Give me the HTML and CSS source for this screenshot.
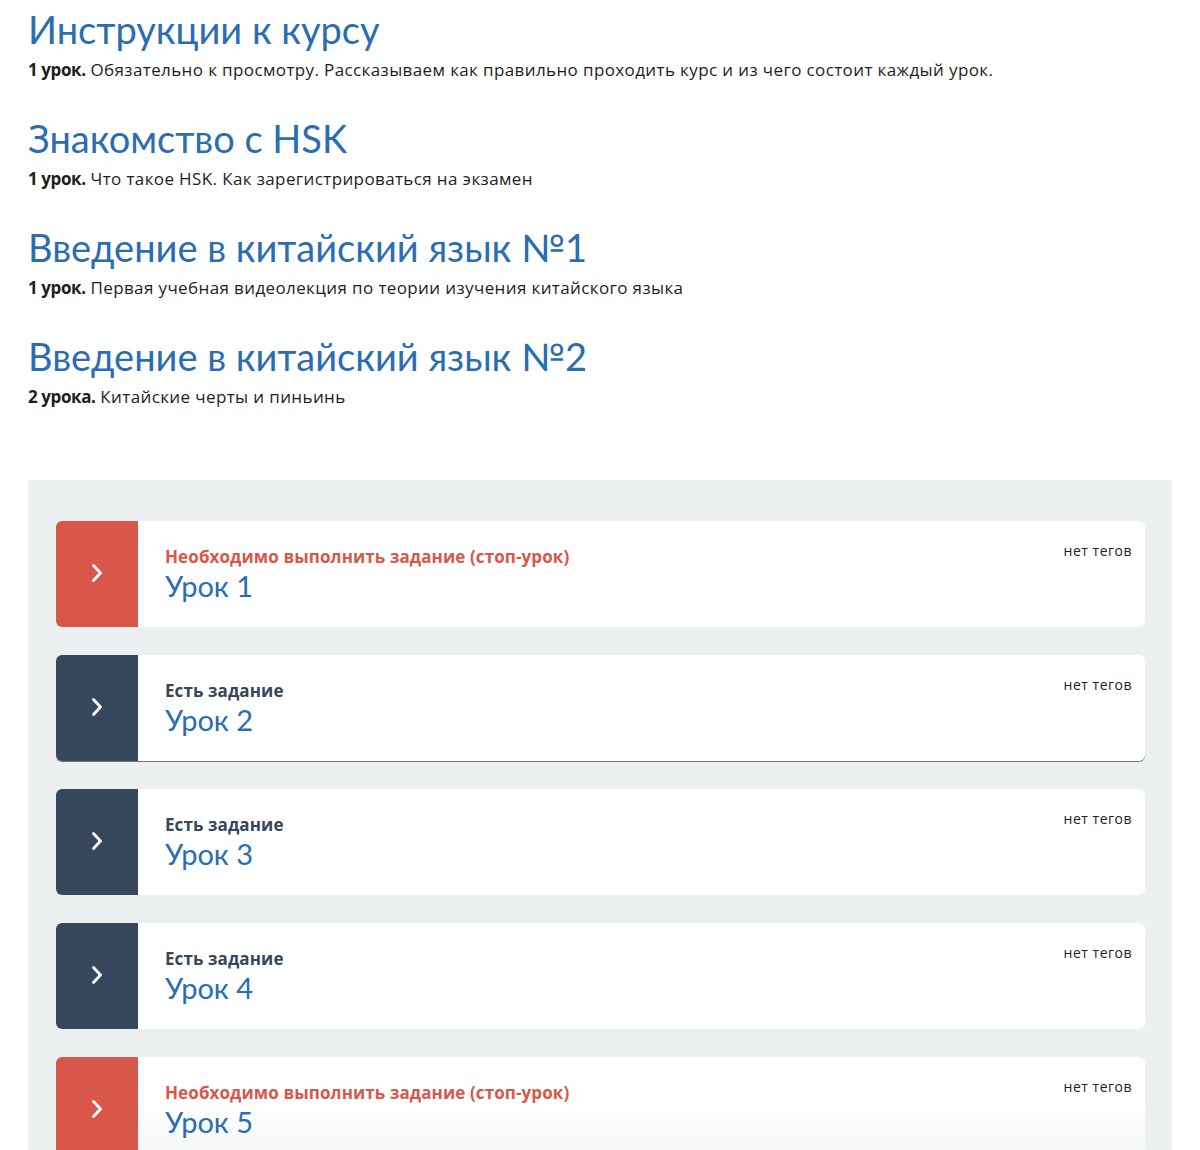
FILE: index.html
```html
<!DOCTYPE html>
<html>
  <head>
    <meta charset="utf-8" />
    <meta name="viewport" content="width=device-width, initial-scale=1" />
    <title>Курс HSK</title>
    <link rel="stylesheet" href="styles.css">
  </head>

  <body>
    <main class="page">
      <section class="topic">
        <h2 class="topic-title">Инструкции к курсу</h2>
        <p class="topic-desc"><b>1 урок.</b> Обязательно к просмотру. Рассказываем как правильно проходить курс и из чего состоит каждый урок.</p>
      </section>

      <section class="topic">
        <h2 class="topic-title">Знакомство с HSK</h2>
        <p class="topic-desc"><b>1 урок.</b> Что такое HSK. Как зарегистрироваться на экзамен</p>
      </section>

      <section class="topic">
        <h2 class="topic-title">Введение в китайский язык №1</h2>
        <p class="topic-desc"><b>1 урок.</b> Первая учебная видеолекция по теории изучения китайского языка</p>
      </section>

      <section class="topic">
        <h2 class="topic-title">Введение в китайский язык №2</h2>
        <p class="topic-desc"><b>2 урока.</b> Китайские черты и пиньинь</p>
      </section>

      <div class="lessons">
        <a class="lesson lesson-stop" href="#">
          <span class="lesson-arrow">
            <svg width="12" height="20" viewBox="0 0 12 20"><path d="M2.5 2.5 L9.5 10 L2.5 17.5" fill="none" stroke="#fff" stroke-width="2.8" stroke-linecap="round" stroke-linejoin="round"/></svg>
          </span>
          <span class="lesson-body">
            <span class="lesson-status">Необходимо выполнить задание (стоп-урок)</span>
            <span class="lesson-name">Урок 1</span>
          </span>
          <span class="lesson-tags">нет тегов</span>
        </a>

        <a class="lesson lesson-task lesson-active" href="#">
          <span class="lesson-arrow">
            <svg width="12" height="20" viewBox="0 0 12 20"><path d="M2.5 2.5 L9.5 10 L2.5 17.5" fill="none" stroke="#fff" stroke-width="2.8" stroke-linecap="round" stroke-linejoin="round"/></svg>
          </span>
          <span class="lesson-body">
            <span class="lesson-status">Есть задание</span>
            <span class="lesson-name">Урок 2</span>
          </span>
          <span class="lesson-tags">нет тегов</span>
        </a>

        <a class="lesson lesson-task" href="#">
          <span class="lesson-arrow">
            <svg width="12" height="20" viewBox="0 0 12 20"><path d="M2.5 2.5 L9.5 10 L2.5 17.5" fill="none" stroke="#fff" stroke-width="2.8" stroke-linecap="round" stroke-linejoin="round"/></svg>
          </span>
          <span class="lesson-body">
            <span class="lesson-status">Есть задание</span>
            <span class="lesson-name">Урок 3</span>
          </span>
          <span class="lesson-tags">нет тегов</span>
        </a>

        <a class="lesson lesson-task" href="#">
          <span class="lesson-arrow">
            <svg width="12" height="20" viewBox="0 0 12 20"><path d="M2.5 2.5 L9.5 10 L2.5 17.5" fill="none" stroke="#fff" stroke-width="2.8" stroke-linecap="round" stroke-linejoin="round"/></svg>
          </span>
          <span class="lesson-body">
            <span class="lesson-status">Есть задание</span>
            <span class="lesson-name">Урок 4</span>
          </span>
          <span class="lesson-tags">нет тегов</span>
        </a>

        <a class="lesson lesson-stop lesson-faded" href="#">
          <span class="lesson-arrow">
            <svg width="12" height="20" viewBox="0 0 12 20"><path d="M2.5 2.5 L9.5 10 L2.5 17.5" fill="none" stroke="#fff" stroke-width="2.8" stroke-linecap="round" stroke-linejoin="round"/></svg>
          </span>
          <span class="lesson-body">
            <span class="lesson-status">Необходимо выполнить задание (стоп-урок)</span>
            <span class="lesson-name">Урок 5</span>
          </span>
          <span class="lesson-tags">нет тегов</span>
        </a>
      </div>
    </main>
  </body>
</html>
```

FILE: styles.css
```css
/* ---------- reset ---------- */
* {
  margin: 0;
  padding: 0;
  box-sizing: border-box;
}

body {
  font-family: "Open Sans", "Lato", sans-serif;
  color: #222;
  background: #fff;
}

/* ---------- topics ---------- */
.page {
  padding: 8px 28px 0 28px;
  width: 1200px;
}

.topic {
  height: 109px;
}

.topic-title {
  font-family: "Lato", "Open Sans", sans-serif;
  font-size: 38px;
  font-weight: 400;
  line-height: 42px;
  color: #2a6db1;
}

.topic-desc {
  margin-top: 9px;
  font-size: 17px;
  line-height: 22px;
  letter-spacing: 0.38px;
  color: #1e1e1e;
}

.topic-desc b {
  font-weight: 700;
  letter-spacing: -0.4px;
}

/* ---------- lessons ---------- */
.lessons {
  margin-top: 36px;
  width: 1144px;
  padding: 41px 27px 40px 28px;
  background: #ecf0f1;
  display: flex;
  flex-direction: column;
  gap: 28px;
}

.lesson {
  display: flex;
  height: 106px;
  background: #fff;
  border-radius: 6px;
  overflow: hidden;
  text-decoration: none;
}

.lesson-faded .lesson-body,
.lesson-faded .lesson-tags {
  background: linear-gradient(#fff 45%, #f3f4f5);
}

.lesson-arrow {
  width: 82px;
  flex: none;
  display: flex;
  align-items: center;
  justify-content: center;
  padding-bottom: 2px;
}

.lesson-stop .lesson-arrow {
  background: #d9574a;
}

.lesson-task .lesson-arrow {
  background: #36475c;
}

.lesson-active {
  box-shadow: 0 1px 0 #6d7884;
}

.lesson-body {
  flex: 1;
  display: flex;
  flex-direction: column;
  padding: 25px 0 0 27px;
}

.lesson-status {
  font-size: 17px;
  font-weight: 700;
  line-height: 22px;
  letter-spacing: 0.1px;
}

.lesson-stop .lesson-status {
  color: #d9574a;
}

.lesson-task .lesson-status {
  color: #36475c;
}

.lesson-name {
  font-family: "Lato", "Open Sans", sans-serif;
  font-size: 29px;
  line-height: 36px;
  color: #2a6db1;
}

.lesson-tags {
  padding: 21px 13px 0 0;
  font-size: 14px;
  line-height: 18px;
  letter-spacing: 0.5px;
  color: #222;
}
```
